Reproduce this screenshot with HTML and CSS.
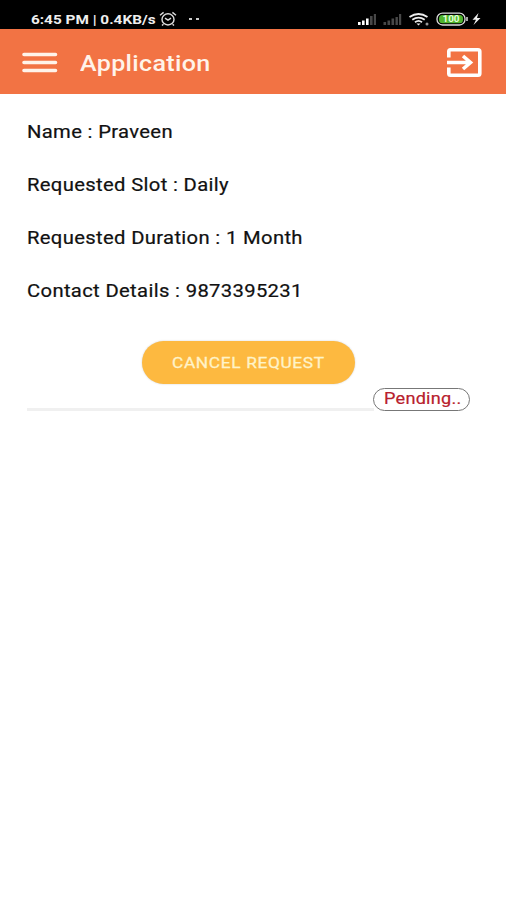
FILE: index.html
```
<!DOCTYPE html>
<html lang="en">
<head>
    <meta charset="UTF-8">
    <meta name="viewport" content="width=device-width, initial-scale=1.0">
    <title>Application</title>
    <link rel="stylesheet" href="styles.css">
</head>
<body>
    <div class="status-bar">
        <span class="status-text"><span class="wide">6:45 PM | 0.4KB/s</span></span>
        <svg class="alarm" width="18" height="16" viewBox="0 0 18 16" fill="none" stroke="#ddd" stroke-width="1.4">
            <ellipse cx="9" cy="8.4" rx="6" ry="5.6"/>
            <path d="M1 4.2L4.6 1.4M17 4.2L13.4 1.4M4.4 13.2L3 14.6M13.6 13.2L15 14.6M6 7.2L9 9.2L12 7.2"/>
        </svg>
        <span class="dots"><i></i><i></i></span>
        <svg class="status-icons" width="126" height="16" viewBox="0 0 126 16">
            <g fill="#fff">
                <rect x="1" y="11" width="2.6" height="3"/>
                <rect x="5" y="9.5" width="2.6" height="4.5"/>
                <rect x="9" y="7.5" width="2.6" height="6.5"/>
            </g>
            <g fill="#484848">
                <rect x="13" y="5" width="2.6" height="9"/>
                <rect x="16.8" y="3" width="2.2" height="11"/>
                <rect x="26.5" y="11" width="2.6" height="3"/>
                <rect x="30.5" y="9.5" width="2.6" height="4.5"/>
                <rect x="34.5" y="7.5" width="2.6" height="6.5"/>
                <rect x="38.5" y="6" width="2.4" height="8"/>
                <rect x="42" y="3" width="2.2" height="11"/>
            </g>
            <g fill="none" stroke="#eee" stroke-width="1.8">
                <path d="M52.5 6Q61.5 0 70.5 6"/>
                <path d="M55.3 8.7Q61.5 4.5 67.7 8.7"/>
                <path d="M58 11.3Q61.5 8.5 65 11.3"/>
            </g>
            <path d="M59.5 12.5h4l-2 2z" fill="#eee"/>
            <circle cx="70" cy="13" r="1.5" fill="#999"/>
            <rect x="80" y="2.2" width="28" height="11.8" rx="5.5" fill="none" stroke="#ddd" stroke-width="1.3"/>
            <rect x="82" y="4" width="24" height="8.2" rx="3.5" fill="#4fb52e"/>
            <path d="M110 6v4" stroke="#ddd" stroke-width="1.5"/>
            <text class="battery" x="94" y="11.3" text-anchor="middle" textLength="17" lengthAdjust="spacingAndGlyphs">100</text>
            <path d="M121.5 2L115.5 8.8H119L116.5 14L123.500 7.1H120z" fill="#eee"/>
        </svg>
    </div>
    <header class="app-bar">
        <svg class="menu" width="36" height="22" viewBox="0 0 36 22" stroke="#fff3ea" stroke-width="3.6" stroke-linecap="round">
            <path d="M2 2.5H33.5M2 10.5H33.5M2 18.5H33.5"/>
        </svg>
        <h1 class="title"><span class="wide">Application</span></h1>
        <svg class="exit" width="37" height="32" viewBox="0 0 37 32" fill="none" stroke="#fff" stroke-width="3.6">
            <path d="M2.8 10.5V4.5Q2.8 2.8 4.5 2.8H32Q33.8 2.8 33.8 4.5V26.5Q33.8 28.3 32 28.3H4.5Q2.8 28.3 2.8 26.5V20.5"/>
            <path d="M1 15.5H24M17 9L24.5 15.5L17 22"/>
        </svg>
    </header>
    <main class="request">
        <p class="row"><span class="wide">Name : Praveen</span></p>
        <p class="row"><span class="wide">Requested Slot : Daily</span></p>
        <p class="row"><span class="wide">Requested Duration : 1 Month</span></p>
        <p class="row"><span class="wide">Contact Details : 9873395231</span></p>
        <button type="button" class="cancel-btn"><span class="wide">CANCEL REQUEST</span></button>
        <div class="divider"></div>
        <span class="status"><span class="wide">Pending..</span></span>
    </main>
</body>
</html>
```
FILE: styles.css
```
body {
    font-family: Roboto, sans-serif;
    background-color: #fff;
    margin: 0;
    min-height: 900px;
}

/* the lettering is set wider than the normal font */
.wide {
    display: inline-block;
    white-space: nowrap;
    transform-origin: left center;
    transform: scaleX(1.155);
}

.status-bar {
    display: flex;
    align-items: center;
    box-sizing: border-box;
    height: 29px;
    padding: 9px 23px 0 31px;
    background-color: #000;
}

.status-text {
    width: 128px;
    color: #eee;
    font-size: 13px;
    font-weight: 700;
}

.status-text .wide {
    transform: scaleX(1.18);
}

.dots {
    display: flex;
    gap: 4px;
    margin-left: 12px;
}

.dots i {
    width: 3px;
    height: 2px;
    background-color: #ccc;
}

.status-icons {
    margin-left: auto;
}

.battery {
    fill: #e4ffd8;
    font-size: 9px;
    font-weight: 700;
}

.app-bar {
    display: flex;
    align-items: center;
    box-sizing: border-box;
    height: 65px;
    padding: 2px 23px 0 22px;
    background-color: #f27344;
}

.title {
    margin: 2px 0 0 22px;
    color: #fff3ea;
    font-size: 21.5px;
    font-weight: 500;
}

.title .wide {
    letter-spacing: 0.3px;
    transform: scaleX(1.165);
}

.exit {
    margin-left: auto;
}

.request {
    position: relative;
    padding: 21px 27px 0;
}

.row {
    margin: 0 0 19px;
    height: 34px;
    line-height: 34px;
    color: #111;
    font-size: 17.5px;
    letter-spacing: 0.3px;
    -webkit-text-stroke: 0.2px #111;
}

.cancel-btn {
    display: block;
    width: 213px;
    height: 43px;
    margin: 33px 0 0 115px;
    padding: 0 0 0 30px;
    border: none;
    border-radius: 22px;
    background-color: #fdb940;
    box-shadow: 0 0 2px rgba(0, 0, 0, 0.2);
    color: #fff3c8;
    font-family: inherit;
    font-size: 15px;
    letter-spacing: 0.55px;
    text-align: left;
    -webkit-text-stroke: 0.3px #fff3c8;
}

.divider {
    width: 347px;
    height: 3px;
    margin-top: 24px;
    background-color: #f0f0f0;
}

.status {
    position: absolute;
    top: 294px;
    left: 373px;
    box-sizing: border-box;
    width: 97px;
    height: 23px;
    padding-left: 10px;
    border: 1.5px solid #777;
    border-radius: 12px;
    background-color: #fff;
    color: #b8202c;
    font-size: 16.5px;
    letter-spacing: 0.2px;
    line-height: 19px;
    -webkit-text-stroke: 0.2px #b8202c;
}

.status .wide {
    transform: scaleX(1.1);
}
```
